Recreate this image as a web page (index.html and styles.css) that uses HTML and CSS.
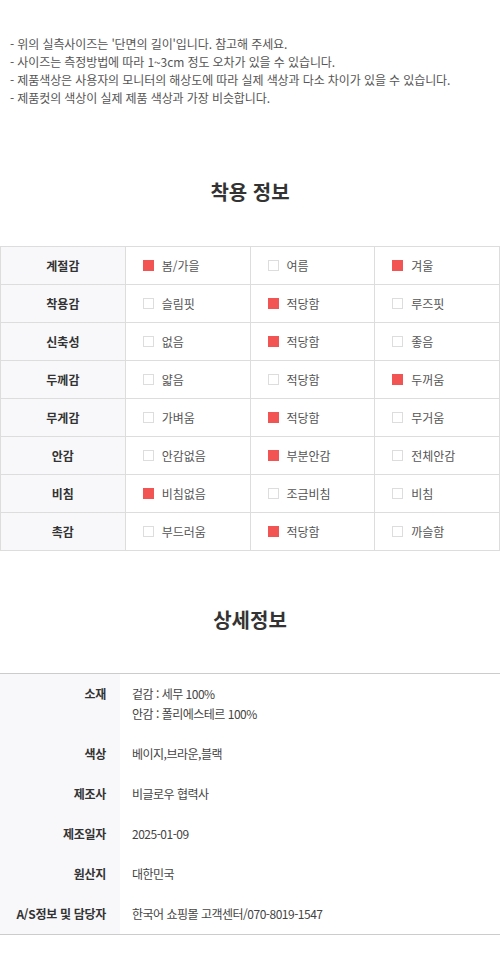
FILE: index.html
```html
<!DOCTYPE html>
<html lang="ko">

<head>
    <meta charset="UTF-8">
    <meta name="viewport" content="width=device-width, initial-scale=1.0">
    <title>상품 정보</title>
    <link rel="stylesheet" href="styles.css">
</head>

<body>
    <div class="product-info">
        <ul class="size-notes">
            <li>- 위의 실측사이즈는 '단면의 길이'입니다. 참고해 주세요.</li>
            <li>- 사이즈는 측정방법에 따라 1~3cm 정도 오차가 있을 수 있습니다.</li>
            <li>- 제품색상은 사용자의 모니터의 해상도에 따라 실제 색상과 다소 차이가 있을 수 있습니다.</li>
            <li>- 제품컷의 색상이 실제 제품 색상과 가장 비슷합니다.</li>
        </ul>

        <section class="fit-section">
            <h2 class="section-title">착용 정보</h2>
            <div class="fit-table">
                <div class="fit-label">계절감</div>
                <div class="fit-option checked"><span class="check"></span>봄/가을</div>
                <div class="fit-option"><span class="check"></span>여름</div>
                <div class="fit-option checked"><span class="check"></span>겨울</div>

                <div class="fit-label">착용감</div>
                <div class="fit-option"><span class="check"></span>슬림핏</div>
                <div class="fit-option checked"><span class="check"></span>적당함</div>
                <div class="fit-option"><span class="check"></span>루즈핏</div>

                <div class="fit-label">신축성</div>
                <div class="fit-option"><span class="check"></span>없음</div>
                <div class="fit-option checked"><span class="check"></span>적당함</div>
                <div class="fit-option"><span class="check"></span>좋음</div>

                <div class="fit-label">두께감</div>
                <div class="fit-option"><span class="check"></span>얇음</div>
                <div class="fit-option"><span class="check"></span>적당함</div>
                <div class="fit-option checked"><span class="check"></span>두꺼움</div>

                <div class="fit-label">무게감</div>
                <div class="fit-option"><span class="check"></span>가벼움</div>
                <div class="fit-option checked"><span class="check"></span>적당함</div>
                <div class="fit-option"><span class="check"></span>무거움</div>

                <div class="fit-label">안감</div>
                <div class="fit-option"><span class="check"></span>안감없음</div>
                <div class="fit-option checked"><span class="check"></span>부분안감</div>
                <div class="fit-option"><span class="check"></span>전체안감</div>

                <div class="fit-label">비침</div>
                <div class="fit-option checked"><span class="check"></span>비침없음</div>
                <div class="fit-option"><span class="check"></span>조금비침</div>
                <div class="fit-option"><span class="check"></span>비침</div>

                <div class="fit-label">촉감</div>
                <div class="fit-option"><span class="check"></span>부드러움</div>
                <div class="fit-option checked"><span class="check"></span>적당함</div>
                <div class="fit-option"><span class="check"></span>까슬함</div>
            </div>
        </section>

        <section class="detail-section">
            <h2 class="section-title">상세정보</h2>
            <dl class="detail-table">
                <dt>소재</dt>
                <dd>겉감 : 세무 100%<br>안감 : 폴리에스테르 100%</dd>
                <dt>색상</dt>
                <dd>베이지,브라운,블랙</dd>
                <dt>제조사</dt>
                <dd>비글로우 협력사</dd>
                <dt>제조일자</dt>
                <dd>2025-01-09</dd>
                <dt>원산지</dt>
                <dd>대한민국</dd>
                <dt>A/S정보 및 담당자</dt>
                <dd>한국어 쇼핑몰 고객센터/070-8019-1547</dd>
            </dl>
        </section>
    </div>
</body>

</html>
```

FILE: styles.css
```css
* {
    margin: 0;
    padding: 0;
    box-sizing: border-box;
}

body {
    background-color: white;
    font-family: "Noto Sans CJK KR", "Noto Sans", sans-serif;
    color: #333;
}

.product-info {
    width: 500px;
    padding-top: 35px;
}

.size-notes {
    list-style: none;
    padding-left: 10px;
    font-size: 12px;
    line-height: 18px;
    color: #555;
    letter-spacing: -0.1px;
}

.section-title {
    text-align: center;
    font-size: 20px;
    line-height: 30px;
    font-weight: 700;
    color: #333;
}

.fit-section {
    margin-top: 70px;
}

.fit-section .section-title {
    margin-bottom: 39px;
}

.fit-table {
    display: grid;
    grid-template-columns: repeat(4, 1fr);
    border-top: 1px solid #ddd;
    border-left: 1px solid #ddd;
}

.fit-label,
.fit-option {
    height: 38px;
    border-right: 1px solid #ddd;
    border-bottom: 1px solid #ddd;
    display: flex;
    align-items: center;
    font-size: 12px;
}

.fit-label {
    justify-content: center;
    background-color: #f8f8fa;
    font-weight: 700;
    color: #333;
}

.fit-option {
    padding-left: 17px;
    gap: 8px;
    color: #555;
}

.check {
    width: 11px;
    height: 11px;
    border: 1px solid #ddd;
    background-color: white;
}

.fit-option.checked .check {
    border-color: #f25454;
    background-color: #f25454;
}

.detail-section {
    margin-top: 54px;
}

.detail-section .section-title {
    margin-bottom: 38px;
}

.detail-table {
    display: grid;
    grid-template-columns: 120px 1fr;
    border-top: 1px solid #ccc;
    border-bottom: 1px solid #ccc;
    font-size: 12px;
    line-height: 20px;
}

.detail-table dt {
    background-color: #f8f8fa;
    text-align: right;
    padding: 10px 14px 10px 0;
    font-weight: 700;
    color: #333;
    letter-spacing: -0.3px;
}

.detail-table dd {
    padding: 10px 12px;
    color: #444;
    letter-spacing: -0.5px;
}
```
